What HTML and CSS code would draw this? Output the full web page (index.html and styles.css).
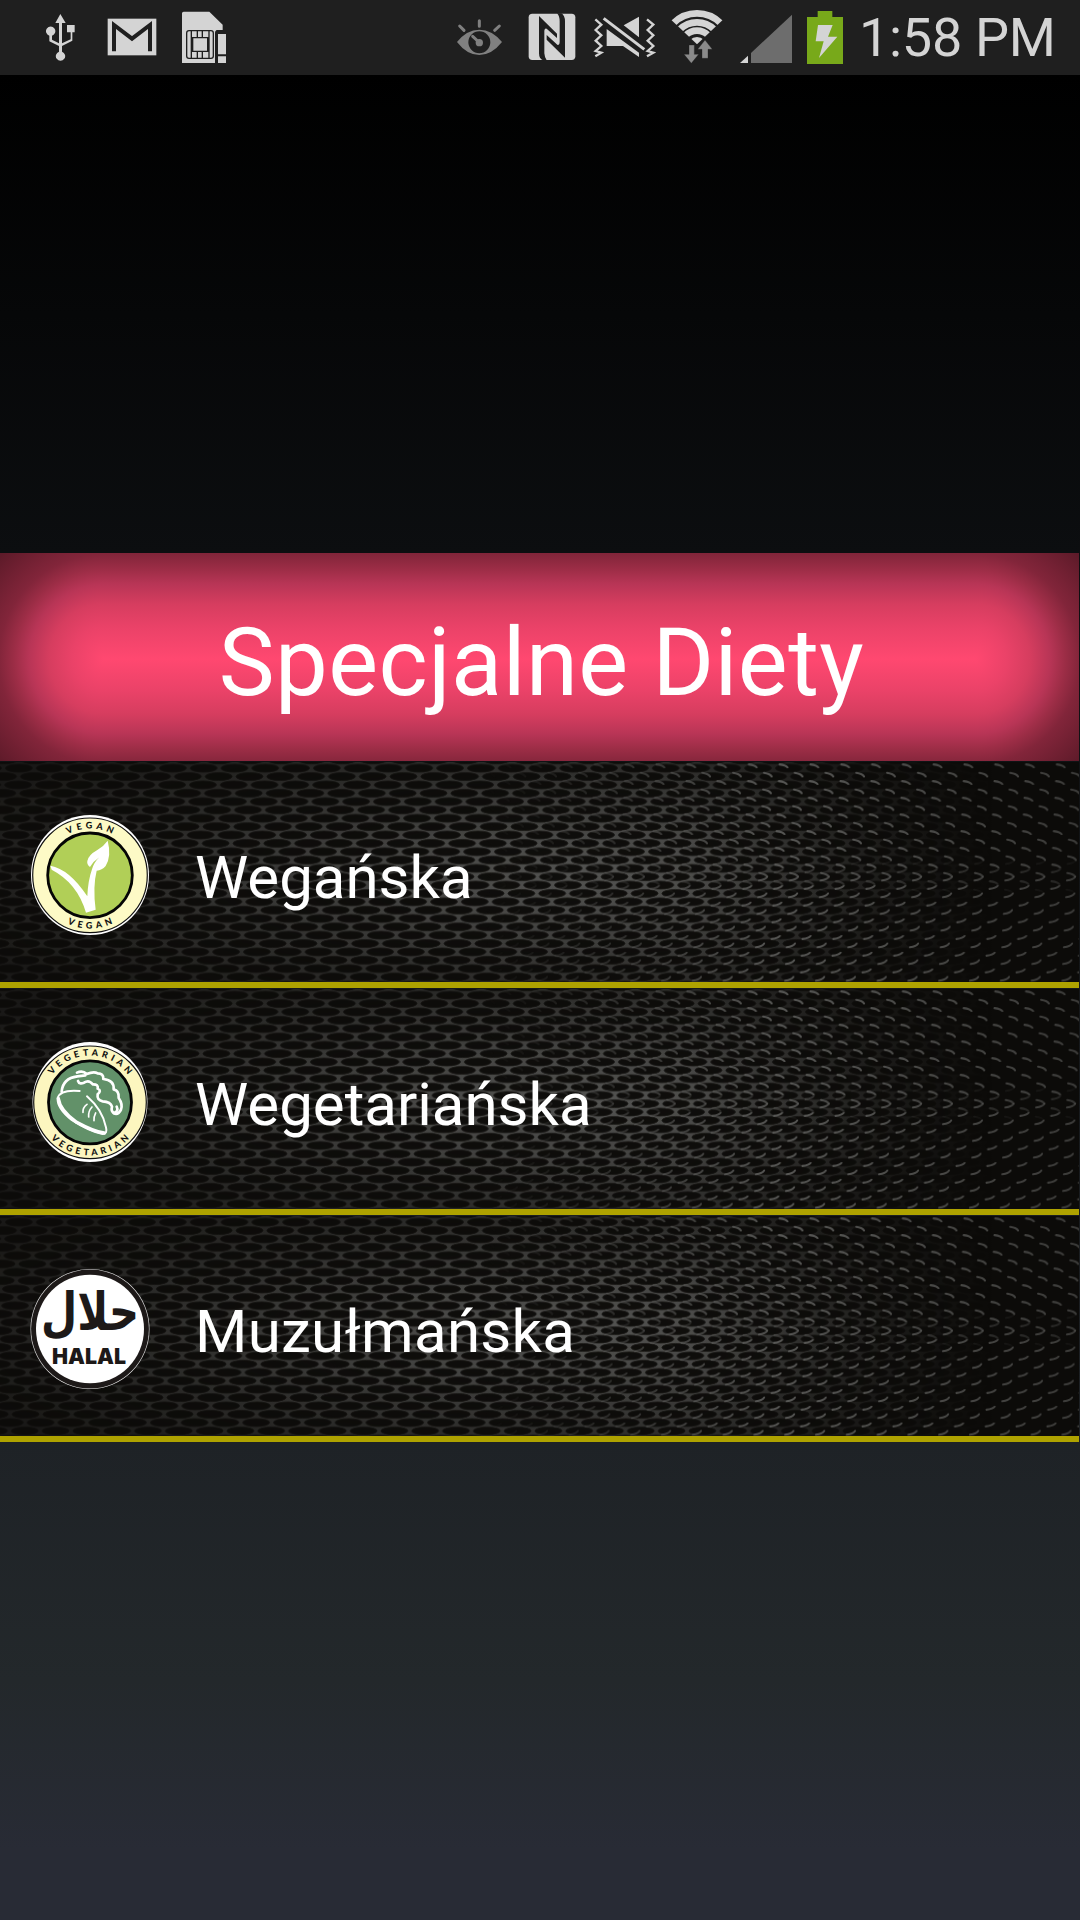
FILE: index.html
```html
<!DOCTYPE html>
<html lang="pl">
<head>
<meta charset="utf-8">
<title>Specjalne Diety</title>
<link rel="stylesheet" href="styles.css">
</head>
<body>
<svg class="defs" aria-hidden="true">
  <defs>
    <pattern id="mesh" width="30.8" height="16.7" patternUnits="userSpaceOnUse" patternTransform="translate(417 56.3) skewX(-2.6)">
      <rect width="30.8" height="16.7" fill="#535351"/>
      <g fill="#0f0e0c" stroke="#1c1b19" stroke-width=".8">
        <ellipse cx="0" cy="0" rx="13.5" ry="4"/><ellipse cx="30.8" cy="0" rx="13.5" ry="4"/>
        <ellipse cx="15.4" cy="8.35" rx="13.5" ry="4"/>
        <ellipse cx="0" cy="16.7" rx="13.5" ry="4"/><ellipse cx="30.8" cy="16.7" rx="13.5" ry="4"/>
      </g>
    </pattern>
    <pattern id="glint" width="30.8" height="16.7" patternUnits="userSpaceOnUse" patternTransform="translate(417 56.3) skewX(-2.6)">
      <g fill="none" stroke="#5c5c5a" stroke-width="2" stroke-linecap="round">
        <path d="M6 4.600Q12.500 5.500 14 8.400"/><path d="M21.400 12.900Q27.900 13.800 29.400 16"/>
      </g>
    </pattern>
    <pattern id="glintLow" width="30.8" height="16.7" patternUnits="userSpaceOnUse" patternTransform="translate(417 56.3) skewX(-2.6)">
      <g fill="none" stroke="#5c5c5a" stroke-width="2" stroke-linecap="round">
        <path d="M6 12.100Q12.500 11.200 14 8.300"/><path d="M21.400 3.800Q27.900 2.900 29.400 .7"/>
      </g>
    </pattern>
    <radialGradient id="lamp" gradientUnits="userSpaceOnUse" cx="0" cy="0" r="1" gradientTransform="translate(590 112) scale(680 170)">
      <stop offset="0" stop-color="#fff"/><stop offset=".3" stop-color="#ccc"/><stop offset=".65" stop-color="#747474"/><stop offset="1" stop-color="#323232"/>
    </radialGradient>
    <linearGradient id="fadeRight"><stop offset=".64" stop-color="#000" stop-opacity="0"/><stop offset=".92" stop-color="#000"/></linearGradient>
    <mask id="meshMask" maskUnits="userSpaceOnUse" x="0" y="0" width="1079" height="220">
      <rect width="1079" height="220" fill="url(#lamp)"/><rect width="1079" height="220" fill="url(#fadeRight)"/>
    </mask>
    <linearGradient id="glintX"><stop offset=".45" stop-color="#fff" stop-opacity="0"/><stop offset=".72" stop-color="#fff" stop-opacity=".95"/><stop offset="1" stop-color="#fff" stop-opacity=".6"/></linearGradient>
    <linearGradient id="upper" x2="0" y2="1"><stop offset=".5" stop-color="#000" stop-opacity="0"/><stop offset=".6" stop-color="#000"/></linearGradient>
    <linearGradient id="lower" x2="0" y2="1"><stop offset=".44" stop-color="#000"/><stop offset=".54" stop-color="#000" stop-opacity="0"/></linearGradient>
    <mask id="upperMask" maskUnits="userSpaceOnUse" x="0" y="0" width="1079" height="220">
      <rect width="1079" height="220" fill="url(#glintX)"/><rect width="1079" height="220" fill="url(#upper)"/>
    </mask>
    <mask id="lowerMask" maskUnits="userSpaceOnUse" x="0" y="0" width="1079" height="220">
      <rect width="1079" height="220" fill="url(#glintX)"/><rect width="1079" height="220" fill="url(#lower)"/>
    </mask>
    <symbol id="grille" viewBox="0 0 1079 220">
      <rect width="1079" height="220" fill="#0c0b09"/>
      <rect width="1079" height="220" fill="url(#mesh)" mask="url(#meshMask)"/>
      <rect width="1079" height="220" fill="url(#glint)" mask="url(#upperMask)"/>
      <rect width="1079" height="220" fill="url(#glintLow)" mask="url(#lowerMask)"/>
    </symbol>
    <path id="arcTop" d="M13.500 60A46.500 46.500 0 0 1 106.500 60"/>
    <path id="arcBottom" d="M6.500 60A53.500 53.500 0 0 0 113.500 60"/>
  </defs>
</svg>

<div class="status">
  <svg class="ico usb" viewBox="135 0 90 225">
    <path d="M181 42L197 69H186V130L212 118V97H201V75H224V97H217V122L186 138V155A14 14 0 1 1 177 155V138L148 124V107A14 14 0 1 1 156 107V119L177 130V69H166Z"/>
  </svg>
  <svg class="ico mail" viewBox="321 0 150 225">
    <rect x="323" y="56" width="146" height="110"/>
    <path d="M342 154V75L396 116L450 75V154" fill="none" stroke="#1f1f1f" stroke-width="12"/>
  </svg>
  <svg class="ico sim" viewBox="543 0 141 225">
    <path d="M551 35H628L668 74V90H650Q645 92 645 98V189H546V40Q546 35 551 35ZM654 102H678V163H654ZM654 169H678V189H654Z"/>
    <g fill="none" stroke="#1f1f1f" stroke-width="4"><rect x="560" y="92" width="80" height="83" rx="7"/><path d="M574 92V175M627 92V175M578 113H623V154H578ZM592 92V112M607 92V112M592 155V175M607 155V175"/></g>
  </svg>
  <svg class="ico eye" viewBox="48 0 141 225">
    <path fill="#808080" fill-rule="evenodd" d="M51 126Q80 89 118 89T186 126Q155 165 118 165T51 126ZM118 94A33 33 0 1 0 118 160A33 33 0 1 0 118 94Z"/>
    <circle cx="118" cy="128" r="11" fill="#808080"/>
    <path d="M98 109L113 123M118 62V79M59 78L72 91M178 78L164 91" fill="none" stroke="#808080" stroke-width="9" stroke-linecap="round"/>
  </svg>
  <svg class="ico nfc" viewBox="261 0 147 225">
    <rect x="266" y="41" width="140" height="139" rx="11"/>
    <path fill="#1f1f1f" d="M297 48L351 101V114L320 86Q314 84 313 92V160Q314 173 320 181H309Q297 176 297 160ZM375 173L320 119V105L352 134Q359 137 359 126V64Q359 48 351 40H364Q375 47 375 64Z"/>
  </svg>
  <svg class="ico mute" viewBox="459 0 189 225">
    <path d="M597 50V112L551 76ZM500 87L597 158V171L549 138H500Z"/>
    <path d="M491 55L613 148" fill="none" stroke="#d4d4d4" stroke-width="9"/>
    <path d="M466 58L484 74L467 90L484 106L467 122L484 138L467 153L484 158L466 169M621 58L640 74L623 90L640 106L623 122L640 138L623 153L640 158L621 169" fill="none" stroke="#d4d4d4" stroke-width="7"/>
  </svg>
  <svg class="ico wifi" viewBox="690 0 162 225">
    <clipPath id="fan"><path d="M771 133L680 47V20H862V47Z"/></clipPath>
    <g clip-path="url(#fan)" fill="none" stroke="#d4d4d4" stroke-width="20"><circle cx="771" cy="140" r="100"/><circle cx="771" cy="140" r="73"/><circle cx="771" cy="140" r="48"/><circle cx="771" cy="140" r="17" stroke-width="24"/></g>
    <path d="M747 135H763V163H776L754 190L732 163H747ZM795 120L817 148H804V175H786V148H773Z" fill="#8a8a8a" stroke="#1f1f1f" stroke-width="1"/>
  </svg>
  <svg class="ico signal" viewBox="30 0 159 225">
    <path d="M30 189L54 167V189Z"/><path fill="#6d6d6d" d="M63 159L186 44V189H63Z"/>
  </svg>
  <svg class="ico battery" viewBox="228 0 114 225">
    <path fill="#78a91a" d="M263 33H307V51H339V192H231V51H263Z"/><path d="M264 75H308L294 110H322L267 174L281 124H257Z"/>
  </svg>
  <span class="clock">1:58 PM</span>
</div>

<main class="diets">
  <h1 class="title"><span>Specjalne Diety</span></h1>
  <div class="row">
    <svg class="grille"><use href="#grille"/></svg>
    <svg class="badge" viewBox="0 0 120 120">
      <ellipse cx="60" cy="60" rx="59" ry="60" fill="#fff"/>
      <circle cx="60" cy="60.300" r="57.300" fill="#fdfac6" stroke="#111" stroke-width="1.200"/>
      <circle cx="60" cy="60.300" r="42.300" fill="#b1cf57" stroke="#050505" stroke-width="2.800"/>
      <g transform="translate(-20 -15) scale(.3333)" fill="#fff">
        <path d="M121 197Q178 207 232 289Q234 242 246 208Q252 187 268 172Q251 183 240 201Q230 194 232 183Q235 165 262 150Q282 138 293 122Q305 168 287 198Q276 211 260 212Q248 260 257 329L228 338Q202 249 125 209Z"/>
      </g>
      <text class="rim"><textPath href="#arcTop" startOffset="50%" textLength="46">VEGAN</textPath></text>
      <text class="rim"><textPath href="#arcBottom" startOffset="50%" textLength="47">VEGAN</textPath></text>
    </svg>
    <span class="label vegan">Wegańska</span>
  </div>
  <div class="row">
    <svg class="grille"><use href="#grille"/></svg>
    <svg class="badge" viewBox="0 0 120 120">
      <ellipse cx="60" cy="60" rx="57.500" ry="60" fill="#fff"/>
      <circle cx="60" cy="60.300" r="56.300" fill="#fcf6bf" stroke="#111" stroke-width="1.200"/>
      <circle cx="60" cy="60.300" r="41.500" fill="#629169" stroke="#050505" stroke-width="2.800"/>
      <g transform="translate(-20 -12) scale(.3333)" fill="none" stroke="#fff" stroke-linecap="round" stroke-linejoin="round">
        <path d="M209 183Q149 178 143 205Q141 235 185 270Q240 306 278 312Q293 312 288 292Q278 240 231 199" stroke-width="6"/>
        <path d="M145 205Q149 240 200 277Q255 307 283 309" stroke-width="10"/>
        <path d="M155 185Q158 145 202 139L226 136M201 128Q218 120 230 132Q252 123 263 130Q281 130 280 147Q313 150 311 178Q328 182 326 204Q339 222 333 239Q325 256 311 250" stroke-width="8"/>
        <path d="M204 153Q208 164 222 158Q237 148 248 163Q266 162 263 176Q276 182 263 193Q260 211 278 214Q302 215 306 230Q302 245 312 249Q327 244 320 230" stroke-width="8"/>
        <path d="M231 223Q218 232 219 247M246 231Q234 244 236 261M257 249Q251 261 252 272" stroke-width="5"/>
      </g>
      <text class="rim"><textPath href="#arcTop" startOffset="50%" textLength="88">VEGETARIAN</textPath></text>
      <text class="rim"><textPath href="#arcBottom" startOffset="50%" textLength="88">VEGETARIAN</textPath></text>
    </svg>
    <span class="label vegetarian">Wegetariańska</span>
  </div>
  <div class="row">
    <svg class="grille"><use href="#grille"/></svg>
    <svg class="badge" viewBox="0 0 120 120">
      <ellipse cx="60" cy="60" rx="59.500" ry="60" fill="#e8e8e8"/>
      <ellipse cx="60" cy="60" rx="58.900" ry="59.400" fill="#1d1918"/>
      <ellipse cx="60" cy="60" rx="54" ry="54.300" fill="#fff"/>
      <text class="arabic" transform="translate(60 61) scale(1 1.2)" textLength="98" lengthAdjust="spacingAndGlyphs">حلال</text>
      <text class="halal" x="59" y="94.700" textLength="74" lengthAdjust="spacingAndGlyphs">HALAL</text>
    </svg>
    <span class="label muslim">Muzułmańska</span>
  </div>
</main>
</body>
</html>
```
FILE: styles.css
```css
* { box-sizing: border-box; }

body {
  margin: 0;
  height: 1920px;
  overflow: hidden;
  font-family: Roboto, "Noto Sans", sans-serif;
  color: #fff;
  background: linear-gradient(#000 75px, #0c0e10 553px, #1e2226 1442px, #23282b 1680px, #282b35 1850px);
}

.defs { position: absolute; width: 0; height: 0; }

.status {
  display: flex;
  height: 75px;
  background: #1f1f1f;
}

.ico { flex: none; height: 75px; fill: #d4d4d4; }
.usb { width: 30px; margin-left: 45px; }
.mail { width: 50px; margin-left: 32px; }
.sim { width: 47px; margin-left: 24px; }
.eye { width: 47px; margin-left: 228px; }
.nfc { width: 49px; margin-left: 24px; }
.mute { width: 63px; margin-left: 17px; }
.wifi { width: 54px; margin-left: 14px; }
.signal { width: 53px; margin-left: 16px; }
.battery { width: 38px; margin-left: 13px; }

.clock {
  margin-left: 15px;
  font-size: 54px;
  line-height: 75px;
  letter-spacing: -.3px;
  white-space: nowrap;
  color: #d4d4d4;
}

.diets { width: 1079px; margin-top: 478px; }

/* Pink glow: a reflected band between two round end caps */
.title {
  --glow: #ff4870 0, #ea4268 32px, #d63d5f 55px, #b83556 75px, #9c2d46 90px, #82253a 105px, #591927 152px;
  display: flex;
  justify-content: center;
  height: 208px;
  margin: 0 0 1px;
  padding: 63px 0 0 4px;
  font-size: 94px;
  font-weight: 400;
  line-height: 94px;
  letter-spacing: .45px;
  white-space: nowrap;
  background:
    radial-gradient(circle at 104px 106px, var(--glow)) left / 104px 100% no-repeat,
    radial-gradient(circle at 0 106px, var(--glow)) right / 104px 100% no-repeat,
    linear-gradient(to top, var(--glow)) 0 0 / 100% 106px no-repeat,
    linear-gradient(var(--glow)) 0 106px / 100% 102px no-repeat;
}

.row {
  display: grid;
  grid-template-columns: 30px 120px 1fr;
  height: 226px;
  margin-bottom: 1px;
  border-bottom: 6px solid #aea200;
}

.grille { grid-area: 1 / 1 / 2 / 4; width: 1079px; height: 220px; }

.badge { grid-area: 1 / 2; width: 120px; height: 120px; margin-top: 53px; }

.label {
  grid-area: 1 / 3;
  margin: 81px 0 0 45px;
  font-size: 60px;
  line-height: 70px;
  white-space: nowrap;
}

.muslim { letter-spacing: .3px; }

.rim { font: 900 9px Lato, sans-serif; text-anchor: middle; fill: #111; }
.arabic { font: 700 44px "DejaVu Sans", sans-serif; text-anchor: middle; fill: #1d1918; }
.halal { font: 900 22px Inter, sans-serif; text-anchor: middle; fill: #1d1918; }
```
